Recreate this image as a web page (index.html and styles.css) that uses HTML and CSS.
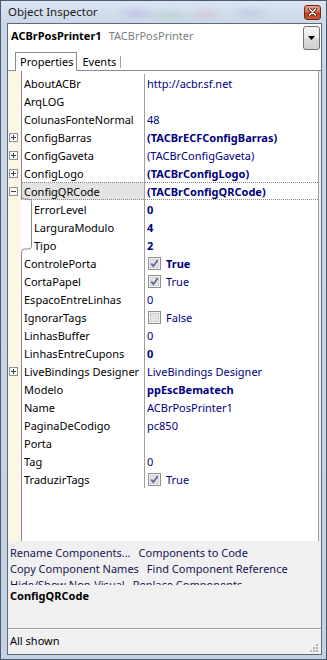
FILE: index.html
```html
<!DOCTYPE html>
<html lang="en">
<head>
  <meta charset="UTF-8" />
  <title>Object Inspector</title>
  <link rel="stylesheet" href="styles.css">
</head>
<body>
  <div class="window">
    <div class="titlebar">
      <span class="title">Object Inspector</span>
      <div class="close">
        <svg width="9" height="8" viewBox="0 0 9 8"><path d="M1.5 1 L7.5 7 M7.5 1 L1.5 7" stroke="#5a1a10" stroke-width="3.2" stroke-linecap="round"/><path d="M1.5 1 L7.5 7 M7.5 1 L1.5 7" stroke="#fff" stroke-width="1.6" stroke-linecap="round"/></svg>
      </div>
    </div>
    <div class="client">
      <div class="combo">
        <span class="inst">ACBrPosPrinter1</span>
        <span class="cls">TACBrPosPrinter</span>
        <div class="drop"><svg width="7" height="4"><path d="M0 0 H7 L3.5 4 Z" fill="#000"/></svg></div>
      </div>
      <div class="tabs">
        <div class="tab active">Properties</div>
        <div class="tab">Events</div>
      </div>
      <div class="grid">
        <div class="row"><span class="gut"></span><span class="name">AboutACBr</span><span class="val">http://acbr.sf.net</span></div>
        <div class="row"><span class="gut"></span><span class="name">ArqLOG</span><span class="val"></span></div>
        <div class="row"><span class="gut"></span><span class="name">ColunasFonteNormal</span><span class="val">48</span></div>
        <div class="row"><span class="gut"><svg width="9" height="9"><rect x=".5" y=".5" width="8" height="8" fill="#fafafa" stroke="#8e9297"/><path d="M2 4.5h5M4.5 2v5" stroke="#404040"/></svg></span><span class="name">ConfigBarras</span><span class="val b">(TACBrECFConfigBarras)</span></div>
        <div class="row"><span class="gut"><svg width="9" height="9"><rect x=".5" y=".5" width="8" height="8" fill="#fafafa" stroke="#8e9297"/><path d="M2 4.5h5M4.5 2v5" stroke="#404040"/></svg></span><span class="name">ConfigGaveta</span><span class="val">(TACBrConfigGaveta)</span></div>
        <div class="row"><span class="gut"><svg width="9" height="9"><rect x=".5" y=".5" width="8" height="8" fill="#fafafa" stroke="#8e9297"/><path d="M2 4.5h5M4.5 2v5" stroke="#404040"/></svg></span><span class="name">ConfigLogo</span><span class="val b">(TACBrConfigLogo)</span></div>
        <div class="row sel"><span class="gut"><svg width="9" height="9"><rect x=".5" y=".5" width="8" height="8" fill="#fafafa" stroke="#8e9297"/><path d="M2 4.5h5" stroke="#404040"/></svg></span><span class="name">ConfigQRCode</span><span class="val b">(TACBrConfigQRCode)</span></div>
        <div class="group">
          <svg class="bracket" width="11" height="62"><path d="M0.5 0 Q0.5 3 3.5 3 H7.5 Q10.5 3 10.5 6 V50 Q10.5 53 7.5 53 H3.5 Q0.5 53 0.5 56 V62" fill="none" stroke="#8a8a8a"/></svg>
          <div class="row sub"><span class="gut"></span><span class="name">ErrorLevel</span><span class="val b">0</span></div>
          <div class="row sub"><span class="gut"></span><span class="name">LarguraModulo</span><span class="val b">4</span></div>
          <div class="row sub"><span class="gut"></span><span class="name">Tipo</span><span class="val b">2</span></div>
        </div>
        <div class="row"><span class="gut"></span><span class="name">ControlePorta</span><span class="val chk b"><svg width="13" height="13"><rect x=".5" y=".5" width="12" height="12" fill="#f3f3f3" stroke="#8f8f8f"/><rect x="2.5" y="2.5" width="8" height="8" fill="#e4e4e4" stroke="#cfcfcf"/><path d="M3.3 6.6 L5.4 9.2 L9.6 3.2" fill="none" stroke="#4f6496" stroke-width="1.7"/></svg>True</span></div>
        <div class="row"><span class="gut"></span><span class="name">CortaPapel</span><span class="val chk"><svg width="13" height="13"><rect x=".5" y=".5" width="12" height="12" fill="#f3f3f3" stroke="#8f8f8f"/><rect x="2.5" y="2.5" width="8" height="8" fill="#e4e4e4" stroke="#cfcfcf"/><path d="M3.3 6.6 L5.4 9.2 L9.6 3.2" fill="none" stroke="#4f6496" stroke-width="1.7"/></svg>True</span></div>
        <div class="row"><span class="gut"></span><span class="name">EspacoEntreLinhas</span><span class="val">0</span></div>
        <div class="row"><span class="gut"></span><span class="name">IgnorarTags</span><span class="val chk"><svg width="13" height="13"><rect x=".5" y=".5" width="12" height="12" fill="#f3f3f3" stroke="#8f8f8f"/><rect x="2.5" y="2.5" width="8" height="8" fill="#e4e4e4" stroke="#cfcfcf"/></svg>False</span></div>
        <div class="row"><span class="gut"></span><span class="name">LinhasBuffer</span><span class="val">0</span></div>
        <div class="row"><span class="gut"></span><span class="name">LinhasEntreCupons</span><span class="val b">0</span></div>
        <div class="row"><span class="gut"><svg width="9" height="9"><rect x=".5" y=".5" width="8" height="8" fill="#fafafa" stroke="#8e9297"/><path d="M2 4.5h5M4.5 2v5" stroke="#404040"/></svg></span><span class="name">LiveBindings Designer</span><span class="val">LiveBindings Designer</span></div>
        <div class="row"><span class="gut"></span><span class="name">Modelo</span><span class="val b">ppEscBematech</span></div>
        <div class="row"><span class="gut"></span><span class="name">Name</span><span class="val">ACBrPosPrinter1</span></div>
        <div class="row"><span class="gut"></span><span class="name">PaginaDeCodigo</span><span class="val">pc850</span></div>
        <div class="row"><span class="gut"></span><span class="name">Porta</span><span class="val"></span></div>
        <div class="row"><span class="gut"></span><span class="name">Tag</span><span class="val">0</span></div>
        <div class="row"><span class="gut"></span><span class="name">TraduzirTags</span><span class="val chk"><svg width="13" height="13"><rect x=".5" y=".5" width="12" height="12" fill="#f3f3f3" stroke="#8f8f8f"/><rect x="2.5" y="2.5" width="8" height="8" fill="#e4e4e4" stroke="#cfcfcf"/><path d="M3.3 6.6 L5.4 9.2 L9.6 3.2" fill="none" stroke="#4f6496" stroke-width="1.7"/></svg>True</span></div>
      </div>
      <div class="links">
        <div class="line"><span>Rename Components...</span><span>Components to Code</span></div>
        <div class="line"><span>Copy Component Names</span><span>Find Component Reference</span></div>
        <div class="line"><span>Hide/Show Non-Visual</span><span>Replace Components</span></div>
      </div>
      <div class="selname">ConfigQRCode</div>
      <div class="spacer"></div>
      <div class="status">
        <span>All shown</span>
        <svg class="grip" width="9" height="9"><g fill="#b4b4b4"><rect x="6" y="0" width="2" height="2"/><rect x="3" y="3" width="2" height="2"/><rect x="6" y="3" width="2" height="2"/><rect x="0" y="6" width="2" height="2"/><rect x="3" y="6" width="2" height="2"/><rect x="6" y="6" width="2" height="2"/></g></svg>
      </div>
    </div>
  </div>
</body>
</html>
```
FILE: styles.css
```css
body { margin: 0; font-family: "Noto Sans", sans-serif; font-size: 11px; color: #000; }
.window { width: 327px; height: 660px; box-sizing: border-box; border: 1px solid #4a5b70; padding: 0 4px 4px 6px; display: flex; flex-direction: column;
  background:
    radial-gradient(ellipse 22px 8px at 135px 12px, rgba(120, 90, 200, 0.18), transparent),
    radial-gradient(ellipse 25px 8px at 170px 14px, rgba(90, 170, 90, 0.16), transparent),
    radial-gradient(ellipse 20px 8px at 205px 13px, rgba(210, 110, 110, 0.16), transparent),
    radial-gradient(ellipse 24px 8px at 250px 12px, rgba(110, 130, 190, 0.16), transparent),
    linear-gradient(#dbe5f1, #cbd8e8 22px, #c3d1e2); }
.titlebar { height: 22px; display: flex; align-items: center; justify-content: space-between; padding-left: 1px; }
.title { color: #1a1a1a; line-height: 16px; font-size: 11.5px; }
.close { width: 17px; height: 15px; box-sizing: border-box; margin-right: 1px; border: 1px solid #6b2a1e; border-radius: 3px; display: flex; align-items: center; justify-content: center;
  background: linear-gradient(#e9a392, #d66c55 45%, #c2391d 55%, #d0573a); }
.client { flex: 1; min-height: 0; border: 1px solid #5d6a7a; background: #f0f0f0; display: flex; flex-direction: column; }
.combo { height: 28px; box-sizing: border-box; background: #fff; display: flex; align-items: flex-start; padding: 4px 1px 0 3px; line-height: 16px; }
.inst { font-weight: bold; }
.cls { color: #7d7d7d; margin-left: 7px; }
.drop { margin-left: auto; margin-top: -2px; width: 17px; height: 24px; box-sizing: border-box; border: 1px solid #707070; border-radius: 3px; display: flex; align-items: center; justify-content: center;
  background: linear-gradient(#f3f3f3, #ebebeb 50%, #dddddd 50%, #cfcfcf); }
.tabs { height: 19px; box-sizing: border-box; background: #fff; border-bottom: 1px solid #898c95; display: flex; align-items: flex-start; padding-left: 7px; }
.tab { height: 18px; line-height: 16px; padding: 2px 4px 0 5px; box-sizing: border-box; display: flex; align-items: flex-start; }
.tab::after { content: ""; width: 1px; height: 12px; background: #a0a0a0; margin: 2px 0 0 4px; }
.tab.active { height: 19px; margin-bottom: -1px; background: #fff; border: 1px solid #898c95; border-bottom: none; padding: 1px 3px 0 4px; }
.tab.active::after { display: none; }
.grid { height: 470px; box-sizing: border-box; padding-top: 3px; margin-right: 2px; border-right: 1px solid #a0a0a0;
  background: linear-gradient(to right, #fcf6e6 13px, #8a8a8a 13px 14px, #fff 14px); }
.row { display: grid; grid-template-columns: 14px 123px 1fr; height: 18px; line-height: 19px; }
.gut { display: flex; align-items: center; padding-left: 1px; }
.name { padding-left: 2px; border-right: 1px solid #a0a0a0; white-space: nowrap; overflow: hidden; }
.val { padding-left: 2px; color: #000080; white-space: nowrap; overflow: hidden; }
.b { font-weight: bold; }
.val.chk { display: flex; align-items: center; gap: 5px; padding-left: 3px; }
.row.sel .name, .row.sel .val { border-top: 1px dotted #8a8a8a; border-bottom: 1px dotted #8a8a8a; line-height: 17px; }
.row.sel .name { background: #e3e3e3; border-radius: 0 0 0 3px; }
.group { position: relative; background: linear-gradient(to right, #fcf6e6 13px, #fff 13px); }
.bracket { position: absolute; left: 13px; top: -4px; }
.row.sub .name { padding-left: 12px; }
.links { height: 44px; box-sizing: border-box; overflow: hidden; padding: 4px 0 0 2px; line-height: 16px; color: #161650; }
.line { display: flex; gap: 8px; white-space: nowrap; }
.selname { margin-top: 3px; padding-left: 2px; line-height: 16px; font-weight: bold; }
.spacer { flex: 1; }
.status { height: 26px; box-sizing: border-box; border-top: 1px solid #a0a0a0; box-shadow: inset 0 1px #fff; padding: 4px 2px 0 2px; line-height: 16px; display: flex; justify-content: space-between; }
.grip { align-self: flex-end; margin-bottom: 1px; }
```
